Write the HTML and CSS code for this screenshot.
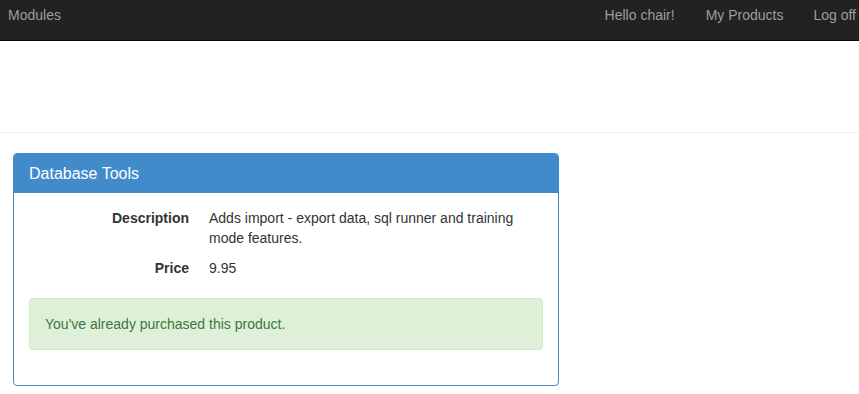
FILE: index.html
```html
<!DOCTYPE html>
<html lang="en">
<head>
    <meta charset="UTF-8">
    <meta name="viewport" content="width=device-width, initial-scale=1.0">
    <title>Database Tools</title>
    <link rel="stylesheet" href="styles.css">
</head>
<body>
    <div class="navbar">
        <a class="navbar-brand" href="#">Modules</a>
        <ul class="navbar-nav">
            <li><a href="#">Hello chair!</a></li>
            <li><a href="#">My Products</a></li>
            <li><a href="#">Log off</a></li>
        </ul>
    </div>

    <div class="page-top"></div>

    <div class="container">
        <div class="panel">
            <div class="panel-heading">
                <h3 class="panel-title">Database Tools</h3>
            </div>
            <div class="panel-body">
                <dl class="dl-horizontal">
                    <dt>Description</dt>
                    <dd>Adds import - export data, sql runner and training mode features.</dd>
                    <dt>Price</dt>
                    <dd>9.95</dd>
                </dl>
                <div class="alert alert-success">You've already purchased this product.</div>
            </div>
        </div>
    </div>
</body>
</html>
```

FILE: styles.css
```css
* {
    box-sizing: border-box;
}

body {
    margin: 0;
    font-family: "Liberation Sans", Arial, sans-serif;
    font-size: 14px;
    line-height: 20px;
    color: #333;
    background-color: #fff;
    overflow-x: hidden;
}

a {
    text-decoration: none;
}

/* Navbar */
.navbar {
    display: flex;
    justify-content: space-between;
    height: 41px;
    background-color: #222;
    border-bottom: 1px solid #080808;
}

.navbar-brand {
    padding: 5px 8px;
    color: #9d9d9d;
    font-size: 14px;
}

.navbar-nav {
    display: flex;
    list-style: none;
    margin: 0 -12px 0 0;
    padding: 0;
}

.navbar-nav a {
    display: block;
    padding: 5px 15px;
    color: #9d9d9d;
}

.navbar-nav li:first-child a {
    padding-right: 16px;
}

/* Header space with rule underneath */
.page-top {
    height: 92px;
    border-bottom: 1px solid #eee;
}

.container {
    padding: 20px 13px;
}

/* Panel */
.panel {
    width: 546px;
    border: 1px solid #428bca;
    border-radius: 4px;
    background-color: #fff;
}

.panel-heading {
    padding: 10px 15px;
    background-color: #428bca;
    border-top-left-radius: 3px;
    border-top-right-radius: 3px;
}

.panel-title {
    margin: 0;
    font-size: 16px;
    font-weight: normal;
    line-height: 19px;
    color: #fff;
}

.panel-body {
    padding: 15px;
}

.dl-horizontal {
    display: grid;
    grid-template-columns: 160px 1fr;
    column-gap: 20px;
    row-gap: 10px;
    margin: 0 0 20px 0;
}

.dl-horizontal dt {
    font-weight: bold;
    text-align: right;
}

.dl-horizontal dd {
    margin: 0;
}

.alert {
    padding: 15px;
    border: 1px solid transparent;
    border-radius: 4px;
    margin-bottom: 20px;
}

.alert-success {
    color: #3c763d;
    background-color: #dff0d8;
    border-color: #d6e9c6;
}
```
